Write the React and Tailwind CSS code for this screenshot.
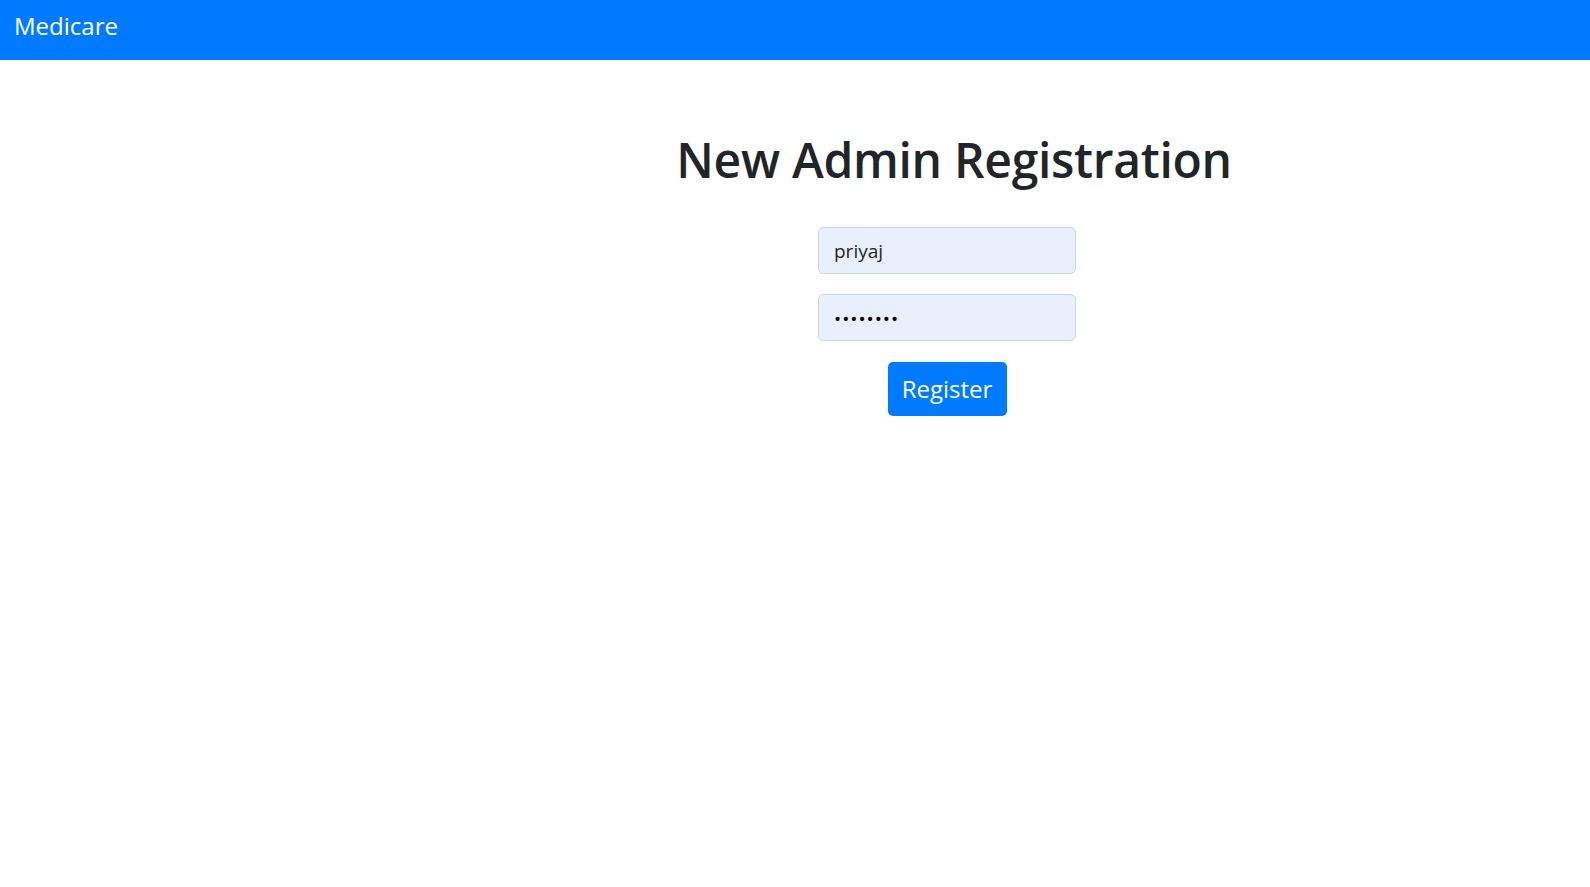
export default function App() {
  return (
    <div className="min-h-[887px] bg-white" style={{ fontFamily: '"Open Sans", "Noto Sans", sans-serif' }}>
      <nav className="h-[60px] bg-[#007bff] flex items-center pl-[14px] pb-[8px]">
        <span className="text-white text-[24px] leading-[30px]">Medicare</span>
      </nav>
      <div className="pl-[304px] flex flex-col items-center">
        <h1 className="mt-[70px] pl-[14px] text-[#212529] text-[48px] leading-[60px] font-semibold tracking-[-0.3px]">New Admin Registration</h1>
        <form className="mt-[37px] flex flex-col items-center" onSubmit={(e) => e.preventDefault()}>
          <input
            type="text"
            defaultValue="priyaj"
            className="w-[258px] h-[47px] px-[15px] pt-[1px] bg-[#e8f0fe] border border-[#ced4da] rounded-[5px] text-[19px] text-[#212529] outline-none"
          />
          <input
            type="password"
            defaultValue="password"
            className="mt-[20px] w-[258px] h-[47px] px-[15px] pt-[3px] bg-[#e8f0fe] border border-[#ced4da] rounded-[5px] text-[19px] text-black outline-none tracking-[1px]"
          />
          <button
            type="submit"
            className="mt-[21px] w-[119px] h-[54px] bg-[#007bff] text-white text-[24px] rounded-[5px]"
          >
            Register
          </button>
        </form>
      </div>
    </div>
  );
}
